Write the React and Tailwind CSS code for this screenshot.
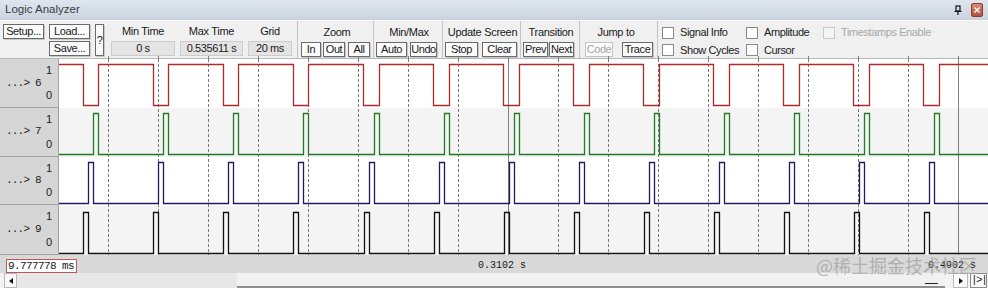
const P = 70.05
const T0 = 23.8
const W = 929

const px = (v) => Math.round(v) + 0.5

function starts() {
  const out = []
  for (let k = 0; k < 14; k++) {
    const t = T0 + k * P
    if (t < W) out.push(t)
  }
  return out
}

// signal that idles high and drops for `width`
function lowPulse(hi, lo, width) {
  let d = `M0 ${hi}`
  for (const t of starts()) d += ` H${px(t)} V${lo} H${px(t + width)} V${hi}`
  return d + ` H${W}`
}

// signal that idles low and rises for `width`, `off` after the period start
function highPulse(hi, lo, off, width) {
  let d = `M0 ${lo}`
  for (const t of starts()) d += ` H${px(t + off)} V${hi} H${px(t + off + width)} V${lo}`
  return d + ` H${W}`
}

const signals = [
  { name: '6', color: '#b02a2a', d: lowPulse(5.5, 46.5, 15.5) },
  { name: '7', color: '#237a23', d: highPulse(54.5, 95.5, 10.5, 5) },
  { name: '8', color: '#1c1c5e', d: highPulse(103.5, 144.5, 5.5, 5) },
  { name: '9', color: '#111111', d: highPulse(153.5, 194.5, 0.5, 5) },
]

const sans = "font-['Liberation_Sans',Arial,sans-serif]"
const mono = "font-['Liberation_Mono','DejaVu_Sans_Mono',monospace]"

function Btn({ w, h = 15, disabled, children }) {
  return (
    <div
      style={{ width: w, height: h }}
      className={`flex shrink-0 items-center justify-center border bg-[#fbfbfb] leading-none tracking-[-0.4px] ${
        disabled ? 'border-[#c4c4c4] text-[#a8a8a8]' : 'border-[#6a6a6a] text-[#1a1a1a] shadow-[1px_1px_0_#c8c8c8]'
      }`}
    >
      {children}
    </div>
  )
}

function Field({ w, children }) {
  return (
    <div
      style={{ width: w }}
      className="flex h-[15px] items-center justify-center border border-[#cdcdcd] bg-[#e4e4e4] leading-none tracking-[-0.4px]"
    >
      {children}
    </div>
  )
}

function Group({ title, className = '', children }) {
  return (
    <div className={`flex shrink-0 flex-col border-l border-[#c4c4c4] pt-[4px] ${className}`}>
      <div className="flex h-[15px] items-center justify-center leading-none tracking-[-0.3px]">{title}</div>
      <div className="mt-[2px] flex">{children}</div>
    </div>
  )
}

function Check({ label, disabled }) {
  return (
    <div className="flex h-[15px] items-center gap-[6px] leading-none tracking-[-0.4px]">
      <span
        className={`h-[12px] w-[12px] shrink-0 border ${
          disabled ? 'border-[#c8c8c8] bg-[#f4f4f4]' : 'border-[#8a8a8a] bg-white'
        }`}
      />
      <span className={disabled ? 'text-[#a8a8a8]' : ''}>{label}</span>
    </div>
  )
}

export default function App() {
  const grid = []
  for (let k = 0; k <= 17; k++) grid.push(49.5 + k * 50)

  return (
    <div className={`relative h-[288px] w-[988px] overflow-hidden bg-[#f0f0f0] text-[11px] text-[#1a1a1a] ${sans}`}>
      {/* title bar */}
      <div className="flex h-[20px] items-center justify-between bg-gradient-to-b from-[#dfe6ef] to-[#c9d3df] pl-[5px] pr-[5px]">
        <span className="text-[11.5px] text-[#3c3c3c]">Logic Analyzer</span>
        <div className="flex items-center gap-[9px]">
          <svg width="8" height="10" viewBox="0 0 8 10">
            <rect x="2" y="1" width="4" height="5" fill="none" stroke="#111" strokeWidth="1.2" />
            <path d="M0.5 6.5H7.5M4 6.5V10" stroke="#111" strokeWidth="1.2" />
          </svg>
          <div className="flex h-[14px] w-[12px] items-center justify-center rounded-[2px] border border-[#8c3b2c] bg-gradient-to-b from-[#d98a78] to-[#b4503e]">
            <svg width="6" height="6" viewBox="0 0 6 6">
              <path d="M0.5 0.5L5.5 5.5M5.5 0.5L0.5 5.5" stroke="#fff" strokeWidth="1.4" />
            </svg>
          </div>
        </div>
      </div>

      {/* toolbar */}
      <div className="flex h-[38px] border-t border-[#f8f8f8]">
        <div className="flex w-[108px] shrink-0 gap-[5px] pl-[3px] pt-[3px]">
          <div className="flex flex-col gap-[2px]">
            <Btn w={41}>Setup...</Btn>
          </div>
          <div className="flex flex-col gap-[2px]">
            <Btn w={41}>Load...</Btn>
            <Btn w={41}>Save...</Btn>
          </div>
          <Btn w={9} h={32}>?</Btn>
        </div>

        <div className="flex w-[189px] shrink-0 gap-[5px] pl-[3px] pt-[3px]">
          {[
            ['Min Time', '0 s', 64],
            ['Max Time', '0.535611 s', 63],
            ['Grid', '20 ms', 44],
          ].map(([t, v, w]) => (
            <div key={t} className="flex flex-col items-center gap-[2px]">
              <div className="flex h-[15px] items-center leading-none tracking-[-0.3px]">{t}</div>
              <Field w={w}>{v}</Field>
            </div>
          ))}
        </div>

        <Group title="Zoom" className="w-[76px] pl-[3px]">
          <Btn w={20}>In</Btn>
          <span className="w-[2px]" />
          <Btn w={22}>Out</Btn>
          <span className="w-[3px]" />
          <Btn w={22}>All</Btn>
        </Group>
        <Group title="Min/Max" className="w-[69px] pl-[2px]">
          <Btn w={31}>Auto</Btn>
          <span className="w-[3px]" />
          <Btn w={27}>Undo</Btn>
        </Group>
        <Group title="Update Screen" className="w-[78px] pl-[2px]">
          <Btn w={33}>Stop</Btn>
          <span className="w-[4px]" />
          <Btn w={35}>Clear</Btn>
        </Group>
        <Group title="Transition" className="w-[59px] pl-[2px]">
          <Btn w={25}>Prev</Btn>
          <span className="w-[1px]" />
          <Btn w={25}>Next</Btn>
        </Group>
        <Group title={<span className="pr-[10px]">Jump to</span>} className="w-[78px] pl-[5px]">
          <Btn w={28} disabled>Code</Btn>
          <span className="w-[9px]" />
          <Btn w={31}>Trace</Btn>
        </Group>

        <div className="grid grid-cols-[84px_77px_auto] gap-y-[2px] border-l border-[#c4c4c4] pl-[4px] pt-[4px]">
          <Check label="Signal Info" />
          <Check label="Amplitude" />
          <Check label="Timestamps Enable" disabled />
          <Check label="Show Cycles" />
          <Check label="Cursor" />
        </div>
      </div>

      {/* signal rows */}
      <div className="flex h-[197px] border-t border-[#b8b8b8]">
        <div className="flex w-[59px] shrink-0 flex-col">
          {signals.map((s, i) => (
            <div
              key={s.name}
              className={`flex items-center justify-between border-b border-r border-[#a2a2a2] bg-[#d6d6d6] pl-[6px] pr-[6px] ${
                i === 3 ? 'h-[50px]' : 'h-[49px]'
              }`}
            >
              <span className={`${mono} text-[11px] tracking-[-0.8px]`}>...&gt; {s.name}</span>
              <div className="flex h-full flex-col justify-between py-[5px] leading-[13px]">
                <span className="text-right">1</span>
                <span className="text-right">0</span>
              </div>
            </div>
          ))}
        </div>

        <div className="relative flex-1">
          <div className="h-[49px] bg-white" />
          <div className="h-[49px] bg-[#f4f4f4]" />
          <div className="h-[49px] bg-white" />
          <div className="h-[50px] bg-[#f4f4f4]" />

          <svg className="absolute left-0 top-0 overflow-visible" width={W} height={197}>
            {grid.map((x, k) =>
              k === 8 || k === 17 ? (
                <line key={x} x1={x} x2={x} y1={-3} y2={201} stroke="#808080" strokeWidth="1" />
              ) : (
                <g key={x}>
                  <line x1={x} x2={x} y1={-3} y2={0} stroke="#808080" strokeWidth="1" />
                  <line x1={x} x2={x} y1={0} y2={197} stroke="#7a7a7a" strokeWidth="1" strokeDasharray="3 2" />
                </g>
              )
            )}
            {signals.map((s) => (
              <path key={s.name} d={s.d} fill="none" stroke={s.color} strokeWidth="1.3" />
            ))}
          </svg>
        </div>
      </div>

      {/* time axis */}
      <div className={`relative h-[18px] bg-[#d9d9d9] ${mono} text-[10px] text-[#1a1a1a]`}>
        <div className="absolute left-[6px] top-[4px] flex h-[14px] w-[71px] items-center border border-[#b85a5a] bg-white pl-[1px] text-[11px] tracking-[-0.6px]">
          9.777778 ms
        </div>
        <span className="absolute left-[478px] top-[3px]">0.3102 s</span>
        <span className="absolute left-[928px] top-[3px]">0.4902 s</span>
      </div>

      {/* scrollbar */}
      <div className="flex h-[15px] bg-[#f3f3f3]">
        <div className="ml-[4px] flex w-[13px] items-center justify-center border border-[#b8b8b8] bg-[#fafafa]">
          <svg width="4" height="6" viewBox="0 0 4 6">
            <path d="M4 0V6L0 3Z" fill="#111" />
          </svg>
        </div>
        <div className="w-[220px] bg-[#e7e7e7]" />
        <div className="flex w-[708px] items-end border-b-2 border-[#8e8e8e] bg-[#f1f1f1]">
          <span className="mb-[2px] ml-[688px] h-[1px] w-[13px] bg-[#222]" />
        </div>
        <div className="ml-[8px] flex w-[15px] items-center justify-center border border-[#b8b8b8] bg-[#fafafa]">
          <svg width="4" height="6" viewBox="0 0 4 6">
            <path d="M0 0V6L4 3Z" fill="#111" />
          </svg>
        </div>
        <div className={`ml-[2px] flex w-[17px] items-center border border-[#8a8a8a] bg-[#fafafa] text-[11px] leading-none tracking-[-1.5px] ${mono}`}>
          |&gt;|
        </div>
      </div>

      {/* watermark */}
      <span className="pointer-events-none absolute left-[816px] top-[253px] whitespace-nowrap font-['Noto_Sans_CJK_SC',sans-serif] text-[18px] leading-[24px] text-[#9c9c9c]/70">
        @稀土掘金技术社区
      </span>
    </div>
  )
}
